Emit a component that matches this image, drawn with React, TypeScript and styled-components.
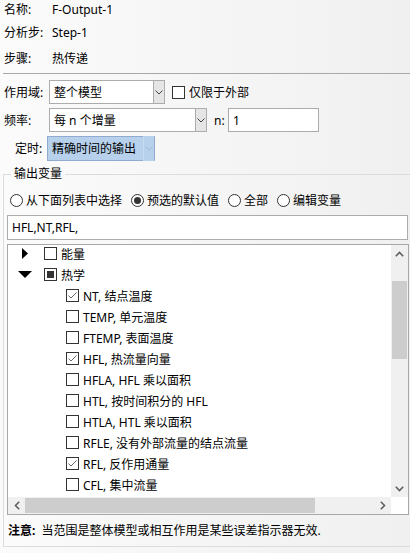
import styled, { createGlobalStyle } from "styled-components";

const GlobalStyle = createGlobalStyle`
  html, body {
    margin: 0;
    padding: 0;
    width: 410px;
    height: 553px;
    overflow: hidden;
  }
  body {
    background: linear-gradient(to right, #fbfbfb, #f0f0f0);
    font-family: "Noto Sans", "Noto Sans CJK SC", sans-serif;
    font-size: 12px;
    color: #000;
  }
`;

interface TreeItem {
  label: string;
  level: number;
  state: "on" | "off" | "mixed";
  expander?: "open" | "closed";
}

const treeItems: TreeItem[] = [
  { label: "能量", level: 0, state: "off", expander: "closed" },
  { label: "热学", level: 0, state: "mixed", expander: "open" },
  { label: "NT, 结点温度", level: 1, state: "on" },
  { label: "TEMP, 单元温度", level: 1, state: "off" },
  { label: "FTEMP, 表面温度", level: 1, state: "off" },
  { label: "HFL, 热流量向量", level: 1, state: "on" },
  { label: "HFLA, HFL 乘以面积", level: 1, state: "off" },
  { label: "HTL, 按时间积分的 HFL", level: 1, state: "off" },
  { label: "HTLA, HTL 乘以面积", level: 1, state: "off" },
  { label: "RFLE, 没有外部流量的结点流量", level: 1, state: "off" },
  { label: "RFL, 反作用通量", level: 1, state: "on" },
  { label: "CFL, 集中流量", level: 1, state: "off" },
];

const radios = [
  { label: "从下面列表中选择", checked: false },
  { label: "预选的默认值", checked: true },
  { label: "全部", checked: false },
  { label: "编辑变量", checked: false },
];

const Chevron = ({ color = "#444" }: { color?: string }) => (
  <svg width="8" height="5" viewBox="0 0 8 5">
    <polyline points="0.5,0.5 4,4 7.5,0.5" fill="none" stroke={color} strokeWidth="1" />
  </svg>
);

const App = () => {
  return (
    <Page>
      <GlobalStyle />
      <InfoGrid>
        <InfoCell $h={18}>名称:</InfoCell>
        <InfoCell $h={18}>F-Output-1</InfoCell>
        <InfoCell $h={28}>分析步:</InfoCell>
        <InfoCell $h={28}>Step-1</InfoCell>
        <InfoCell $h={24}>步骤:</InfoCell>
        <InfoCell $h={24}>热传递</InfoCell>
      </InfoGrid>
      <Separator />

      <FormRows>
        <FieldRow>
          <FieldLabel $width={45}>作用域:</FieldLabel>
          <Combo $width={116}>
            <span>整个模型</span>
            <ComboButton>
              <Chevron />
            </ComboButton>
          </Combo>
          <CheckLabel>
            <Box />
            仅限于外部
          </CheckLabel>
        </FieldRow>
        <FieldRow>
          <FieldLabel $width={45}>频率:</FieldLabel>
          <Combo $width={158}>
            <span>每 n 个增量</span>
            <ComboButton>
              <Chevron />
            </ComboButton>
          </Combo>
          <SmallLabel>n:</SmallLabel>
          <TextBox $width={91}>1</TextBox>
        </FieldRow>
        <FieldRow>
          <FieldLabel $width={32} $indent={11}>
            定时:
          </FieldLabel>
          <Combo $width={108} $selected>
            <span>精确时间的输出</span>
            <ComboButton $selected>
              <Chevron color="#a9b9cf" />
            </ComboButton>
          </Combo>
        </FieldRow>
      </FormRows>

      <Group>
        <Legend>输出变量</Legend>
        <RadioRow>
          {radios.map((r) => (
            <RadioOption key={r.label}>
              <RadioCircle $checked={r.checked} />
              {r.label}
            </RadioOption>
          ))}
        </RadioRow>
        <WideInput>HFL,NT,RFL,</WideInput>

        <TreeBox>
          <TreeViewport>
            <TreeRows>
              {treeItems.map((item) => (
                <TreeRow key={item.label} $level={item.level}>
                  {item.level === 0 && (
                    <Expander>
                      {item.expander === "open" ? (
                        <svg width="14" height="8" viewBox="0 0 14 8">
                          <polygon points="0,0 14,0 7,7" fill="#000" />
                        </svg>
                      ) : (
                        <svg width="7" height="11" viewBox="0 0 7 11">
                          <polygon points="0,0 6,5.5 0,11" fill="#000" />
                        </svg>
                      )}
                    </Expander>
                  )}
                  <TreeCheck>
                    {item.state === "on" && (
                      <svg width="11" height="11" viewBox="0 0 11 11">
                        <polyline
                          points="1.5,5.5 4,8 9.5,2.5"
                          fill="none"
                          stroke="#6b6b6b"
                          strokeWidth="1"
                        />
                      </svg>
                    )}
                    {item.state === "mixed" && <MixedMark />}
                  </TreeCheck>
                  <span>{item.label}</span>
                </TreeRow>
              ))}
            </TreeRows>
          </TreeViewport>

          <VScroll>
            <ScrollArrow>
              <svg width="9" height="6" viewBox="0 0 9 6">
                <polyline points="0.8,5.2 4.5,1.5 8.2,5.2" fill="none" stroke="#606060" strokeWidth="1.6" />
              </svg>
            </ScrollArrow>
            <VThumb $offset={19} $size={78} />
            <ScrollFill />
            <ScrollArrow>
              <svg width="9" height="6" viewBox="0 0 9 6">
                <polyline points="0.8,0.8 4.5,4.5 8.2,0.8" fill="none" stroke="#606060" strokeWidth="1.6" />
              </svg>
            </ScrollArrow>
          </VScroll>

          <HScroll>
            <ScrollArrow>
              <svg width="6" height="9" viewBox="0 0 6 9">
                <polyline points="5.2,0.8 1.5,4.5 5.2,8.2" fill="none" stroke="#606060" strokeWidth="1.6" />
              </svg>
            </ScrollArrow>
            <HThumb $size={290} />
            <ScrollFill />
            <ScrollArrow>
              <svg width="6" height="9" viewBox="0 0 6 9">
                <polyline points="0.8,0.8 4.5,4.5 0.8,8.2" fill="none" stroke="#606060" strokeWidth="1.6" />
              </svg>
            </ScrollArrow>
          </HScroll>
          <Corner />
        </TreeBox>

        <Note>
          <b>注意:</b>&nbsp;&nbsp;当范围是整体模型或相互作用是某些误差指示器无效.
        </Note>
      </Group>
    </Page>
  );
};

export default App;

const Page = styled.div`
  width: 410px;
  height: 553px;
  overflow: hidden;
`;

const InfoGrid = styled.div`
  display: grid;
  grid-template-columns: 48px auto;
  padding-left: 4px;
`;

const InfoCell = styled.div<{ $h: number }>`
  height: ${(p) => p.$h}px;
  display: flex;
  align-items: center;
  white-space: nowrap;
`;

const Separator = styled.div`
  height: 1px;
  margin: 3px 0 0 3px;
  background: #a8a8a8;
`;

const FormRows = styled.div`
  display: flex;
  flex-direction: column;
  gap: 4px;
  margin-top: 6px;
`;

const FieldRow = styled.div`
  display: flex;
  align-items: center;
  height: 24px;
  padding-left: 4px;
`;

const FieldLabel = styled.div<{ $width: number; $indent?: number }>`
  width: ${(p) => p.$width}px;
  margin-left: ${(p) => p.$indent ?? 0}px;
  white-space: nowrap;
`;

const Combo = styled.div<{ $width: number; $selected?: boolean }>`
  box-sizing: border-box;
  width: ${(p) => p.$width}px;
  height: ${(p) => (p.$selected ? 25 : 24)}px;
  display: flex;
  align-items: center;
  justify-content: space-between;
  padding-left: 4px;
  background: ${(p) => (p.$selected ? "#b7d1ed" : "#fff")};
  border: 1px solid ${(p) => (p.$selected ? "#90aad0" : "#acacac")};
  white-space: nowrap;
`;

const ComboButton = styled.div<{ $selected?: boolean }>`
  box-sizing: border-box;
  width: 12px;
  height: calc(100% + 2px);
  margin-right: -1px;
  display: flex;
  align-items: center;
  justify-content: center;
  background: ${(p) => (p.$selected ? "#b7d1ed" : "#e5e5e5")};
  border: 1px solid ${(p) => (p.$selected ? "#90aad0" : "#acacac")};
  border-left-color: ${(p) => (p.$selected ? "#c8dbf0" : "#acacac")};
  border-top-color: ${(p) => (p.$selected ? "transparent" : "#acacac")};
  border-bottom-color: ${(p) => (p.$selected ? "transparent" : "#acacac")};
`;

const CheckLabel = styled.label`
  display: flex;
  align-items: center;
  gap: 4px;
  margin-left: 7px;
  white-space: nowrap;
`;

const Box = styled.span`
  box-sizing: border-box;
  width: 13px;
  height: 13px;
  border: 1px solid #333;
  background: #fff;
`;

const SmallLabel = styled.span`
  margin-left: 7px;
  width: 14px;
`;

const TextBox = styled.div<{ $width: number }>`
  box-sizing: border-box;
  width: ${(p) => p.$width}px;
  height: 24px;
  display: flex;
  align-items: center;
  padding-left: 4px;
  background: #fff;
  border: 1px solid #acacac;
`;

const Group = styled.fieldset`
  margin: 7px 0 0 3px;
  padding: 0 0 7px 3px;
  border: 1px solid #dcdcdc;
  border-right: none;
  min-width: 0;
`;

const Legend = styled.legend`
  margin-left: 4px;
  padding: 0 3px;
  line-height: 14px;
`;

const RadioRow = styled.div`
  display: flex;
  align-items: center;
  gap: 9px;
  height: 18px;
  margin-top: 10px;
  padding-left: 3px;
  white-space: nowrap;
`;

const RadioOption = styled.label`
  display: flex;
  align-items: center;
  gap: 3px;
`;

const RadioCircle = styled.span<{ $checked: boolean }>`
  box-sizing: border-box;
  width: 13px;
  height: 13px;
  border-radius: 50%;
  border: 1px solid #333;
  background: #fff;
  display: flex;
  align-items: center;
  justify-content: center;

  &::after {
    content: "";
    width: 7px;
    height: 7px;
    border-radius: 50%;
    background: ${(p) => (p.$checked ? "#333" : "transparent")};
  }
`;

const WideInput = styled.div`
  box-sizing: border-box;
  height: 25px;
  margin: 6px 2px 0 0;
  display: flex;
  align-items: center;
  padding-left: 4px;
  background: #fff;
  border: 1px solid #acacac;
`;

const TreeBox = styled.div`
  box-sizing: border-box;
  height: 271px;
  margin: 4px 1px 0 0;
  border: 1px solid #a8a8a8;
  background: #fff;
  display: grid;
  grid-template-columns: 1fr 17px;
  grid-template-rows: 1fr 17px;
`;

const TreeViewport = styled.div`
  overflow: hidden;
  min-width: 0;
  min-height: 0;
`;

const TreeRows = styled.div`
  margin-top: -2px;
`;

const TreeRow = styled.div<{ $level: number }>`
  height: 21px;
  display: flex;
  align-items: center;
  gap: 4px;
  padding-left: ${(p) => (p.$level === 0 ? 0 : 58)}px;
  white-space: nowrap;
`;

const Expander = styled.span`
  width: 30px;
  display: flex;
  justify-content: center;
  padding-left: 2px;
`;

const TreeCheck = styled.span`
  box-sizing: border-box;
  width: 13px;
  height: 13px;
  border: 1px solid #333;
  background: #fff;
  display: flex;
  align-items: center;
  justify-content: center;
`;

const MixedMark = styled.span`
  width: 7px;
  height: 7px;
  background: #333;
`;

const VScroll = styled.div`
  background: #f0f0f0;
  display: flex;
  flex-direction: column;
`;

const HScroll = styled.div`
  background: #f0f0f0;
  display: flex;
`;

const ScrollArrow = styled.div`
  flex: 0 0 17px;
  display: flex;
  align-items: center;
  justify-content: center;
`;

const ScrollFill = styled.div`
  flex: 1;
`;

const VThumb = styled.div<{ $offset: number; $size: number }>`
  margin: ${(p) => p.$offset}px 1px 0;
  height: ${(p) => p.$size}px;
  background: #cdcdcd;
`;

const HThumb = styled.div<{ $size: number }>`
  margin: 1px 0;
  width: ${(p) => p.$size}px;
  background: #cdcdcd;
`;

const Corner = styled.div`
  background: #fff;
`;

const Note = styled.div`
  margin-top: 8px;
  padding-left: 1px;
  line-height: 16px;
  white-space: nowrap;

  b {
    font-weight: 700;
  }
`;
